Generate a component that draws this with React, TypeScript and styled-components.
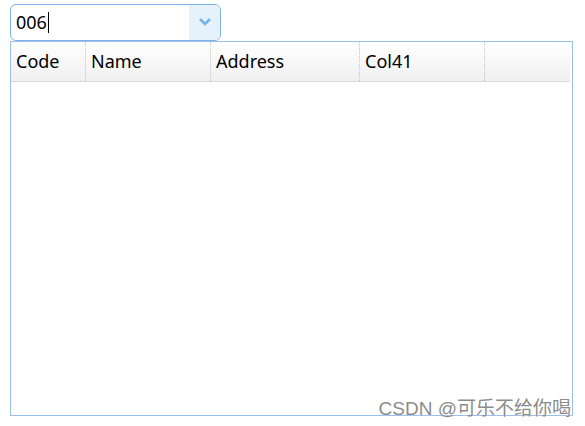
import React from "react";
import styled, { createGlobalStyle } from "styled-components";

const Global = createGlobalStyle`
  html, body {
    margin: 0;
    background: #ffffff;
    font-family: "Noto Sans", "Open Sans", sans-serif;
  }
`;

const Page = styled.div`
  position: relative;
  width: 585px;
  height: 426px;
  padding: 4px 0 0 10px;
  box-sizing: border-box;
`;

const Combo = styled.div`
  display: flex;
  width: 211px;
  height: 37px;
  box-sizing: border-box;
  border: 1px solid #7fb2e8;
  border-radius: 6px;
  overflow: hidden;
  background: #fff;
`;

const ComboText = styled.div`
  flex: 1;
  display: flex;
  align-items: center;
  padding-left: 5px;
  padding-bottom: 1px;
  font-size: 18px;
  color: #000;
  .caret {
    display: inline-block;
    width: 1px;
    height: 21px;
    background: #000;
    margin-left: 1px;
  }
`;

const ComboButton = styled.div`
  width: 31px;
  display: flex;
  align-items: center;
  justify-content: center;
  padding-bottom: 2px;
  background: #e5f1fb;
`;

const Grid = styled.div`
  width: 563px;
  height: 375px;
  box-sizing: border-box;
  border: 1px solid #99bfea;
  padding: 0 2px 0 0;
`;

const HeaderRow = styled.div`
  display: flex;
  height: 40px;
  box-sizing: border-box;
  border-bottom: 1px solid #d9d9d9;
  background: linear-gradient(#ffffff, #f0f0f0);
`;

const HeaderCell = styled.div<{ $w: number; $last?: boolean }>`
  width: ${(p) => p.$w}px;
  flex: ${(p) => (p.$last ? "1" : "none")};
  box-sizing: border-box;
  display: flex;
  align-items: center;
  padding: 0 0 2px 5px;
  font-size: 18px;
  color: #000;
  border-right: ${(p) => (p.$last ? "none" : "1px dotted #c4c4c4")};
`;

const Watermark = styled.div`
  position: absolute;
  right: 14px;
  bottom: 6px;
  font-family: "Liberation Sans", "Noto Sans CJK SC", sans-serif;
  font-size: 19px;
  color: #8c8c8c;
  text-shadow: 0 0 1px #fff;
`;

const columns = [
  { name: "Code", w: 75 },
  { name: "Name", w: 125 },
  { name: "Address", w: 149 },
  { name: "Col41", w: 125 },
];

export default function App() {
  return (
    <Page>
      <Global />
      <Combo>
        <ComboText>
          006<span className="caret" />
        </ComboText>
        <ComboButton>
          <svg width="14" height="9" viewBox="0 0 14 9">
            <path d="M2 2 L7 7 L12 2" fill="none" stroke="#74b4ea" strokeWidth="2.6" />
          </svg>
        </ComboButton>
      </Combo>
      <Grid>
        <HeaderRow>
          {columns.map((c) => (
            <HeaderCell key={c.name} $w={c.w}>
              {c.name}
            </HeaderCell>
          ))}
          <HeaderCell $w={0} $last />
        </HeaderRow>
      </Grid>
      <Watermark>CSDN @可乐不给你喝</Watermark>
    </Page>
  );
}
